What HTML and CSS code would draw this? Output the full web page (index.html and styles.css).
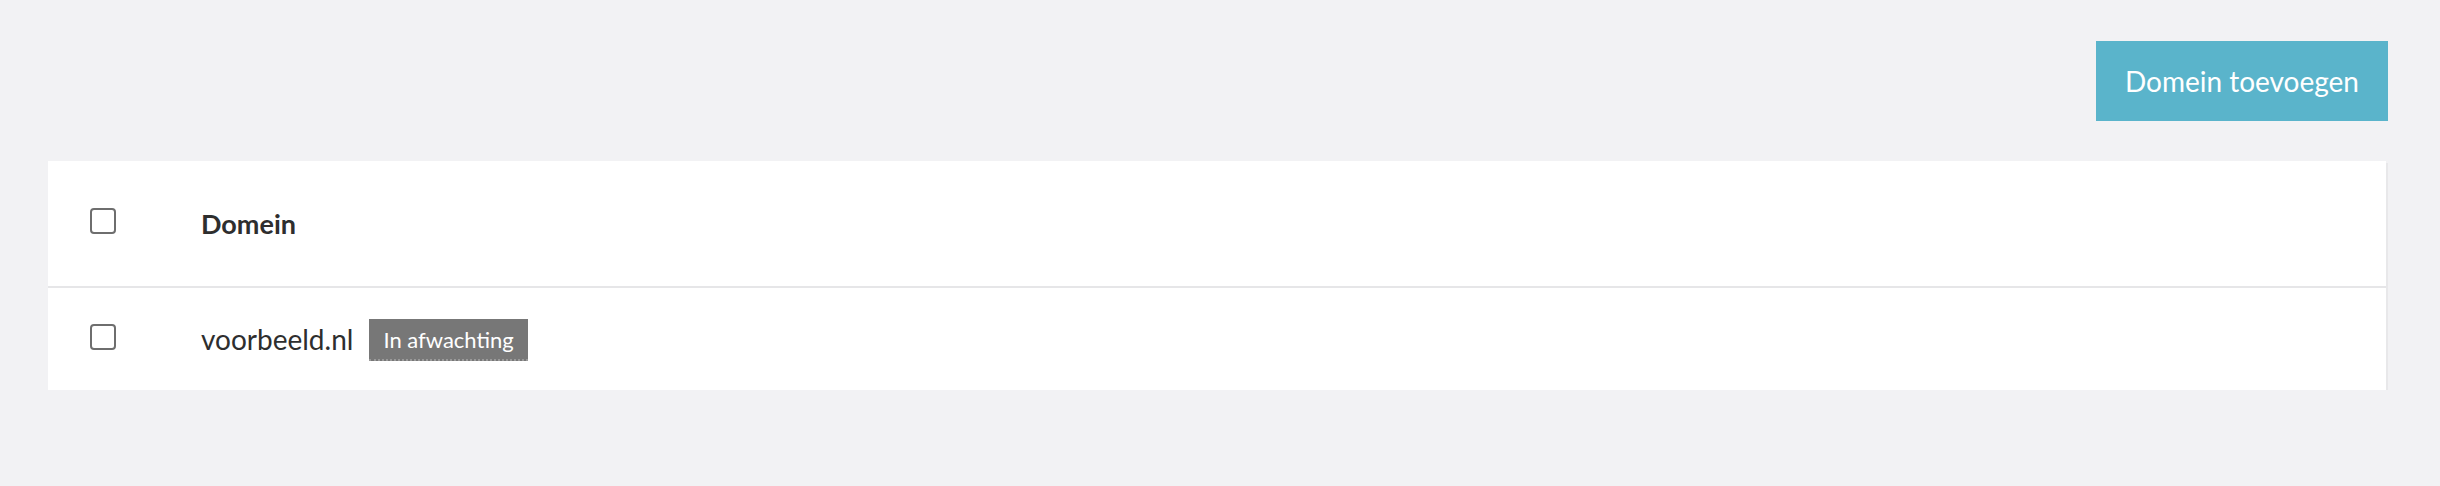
FILE: index.html
```html
<!DOCTYPE html>
<html lang="nl">
<head>
<meta charset="utf-8">
<title>Domeinen</title>
<link rel="stylesheet" href="styles.css">
</head>
<body>
<div class="page">
  <div class="toolbar">
    <button class="btn-primary" type="button">Domein toevoegen</button>
  </div>
  <div class="card">
    <div class="row row-head">
      <div class="cell-check"><span class="checkbox"></span></div>
      <div class="cell-main"><span class="col-title">Domein</span></div>
    </div>
    <div class="row row-body">
      <div class="cell-check"><span class="checkbox"></span></div>
      <div class="cell-main"><span class="domain">voorbeeld.nl</span><abbr class="badge" title="In afwachting">In afwachting</abbr></div>
    </div>
  </div>
</div>
</body>
</html>
```
FILE: styles.css
```css
html, body {
  margin: 0;
  padding: 0;
  background: #f2f2f4;
  font-family: Lato, "Open Sans", "Liberation Sans", sans-serif;
  color: #333;
}
.page {
  padding: 41px 52px 0 48px;
}
.toolbar {
  display: flex;
  justify-content: flex-end;
}
.btn-primary {
  height: 80px;
  padding: 0 29px;
  border: 0;
  background: #5ab4cb;
  color: #fff;
  font-family: inherit;
  font-size: 28px;
  font-weight: 400;
  cursor: pointer;
}
.card {
  margin-top: 40px;
  margin-right: 2px;
  background: #fff;
  box-shadow: 2px 2px 0 #e8e8ea;
}
.row {
  display: flex;
  align-items: center;
}
.row-head {
  height: 125px;
  border-bottom: 2px solid #e6e6e8;
}
.row-body {
  height: 102px;
}
.cell-check {
  width: 153px;
  padding-left: 42px;
  box-sizing: border-box;
  display: flex;
}
.row-head .cell-check { margin-top: -5px; }
.row-body .cell-check { margin-top: -4px; }
.checkbox {
  width: 22px;
  height: 22px;
  border: 2px solid #6e6e6e;
  border-radius: 4px;
  display: block;
}
.cell-main {
  display: flex;
  align-items: center;
}
.col-title {
  font-size: 27px;
  font-weight: 700;
  color: #2e2e2e;
}
.domain {
  font-size: 28px;
  color: #2e2e2e;
}
.badge {
  margin-left: 16px;
  height: 42px;
  box-sizing: border-box;
  padding: 0 14px;
  display: flex;
  align-items: center;
  background: #777;
  color: #fff;
  font-size: 22px;
  text-decoration: none;
  border-bottom: 2px dotted #9a9a9a;
  margin-top: 2px;
}
```
